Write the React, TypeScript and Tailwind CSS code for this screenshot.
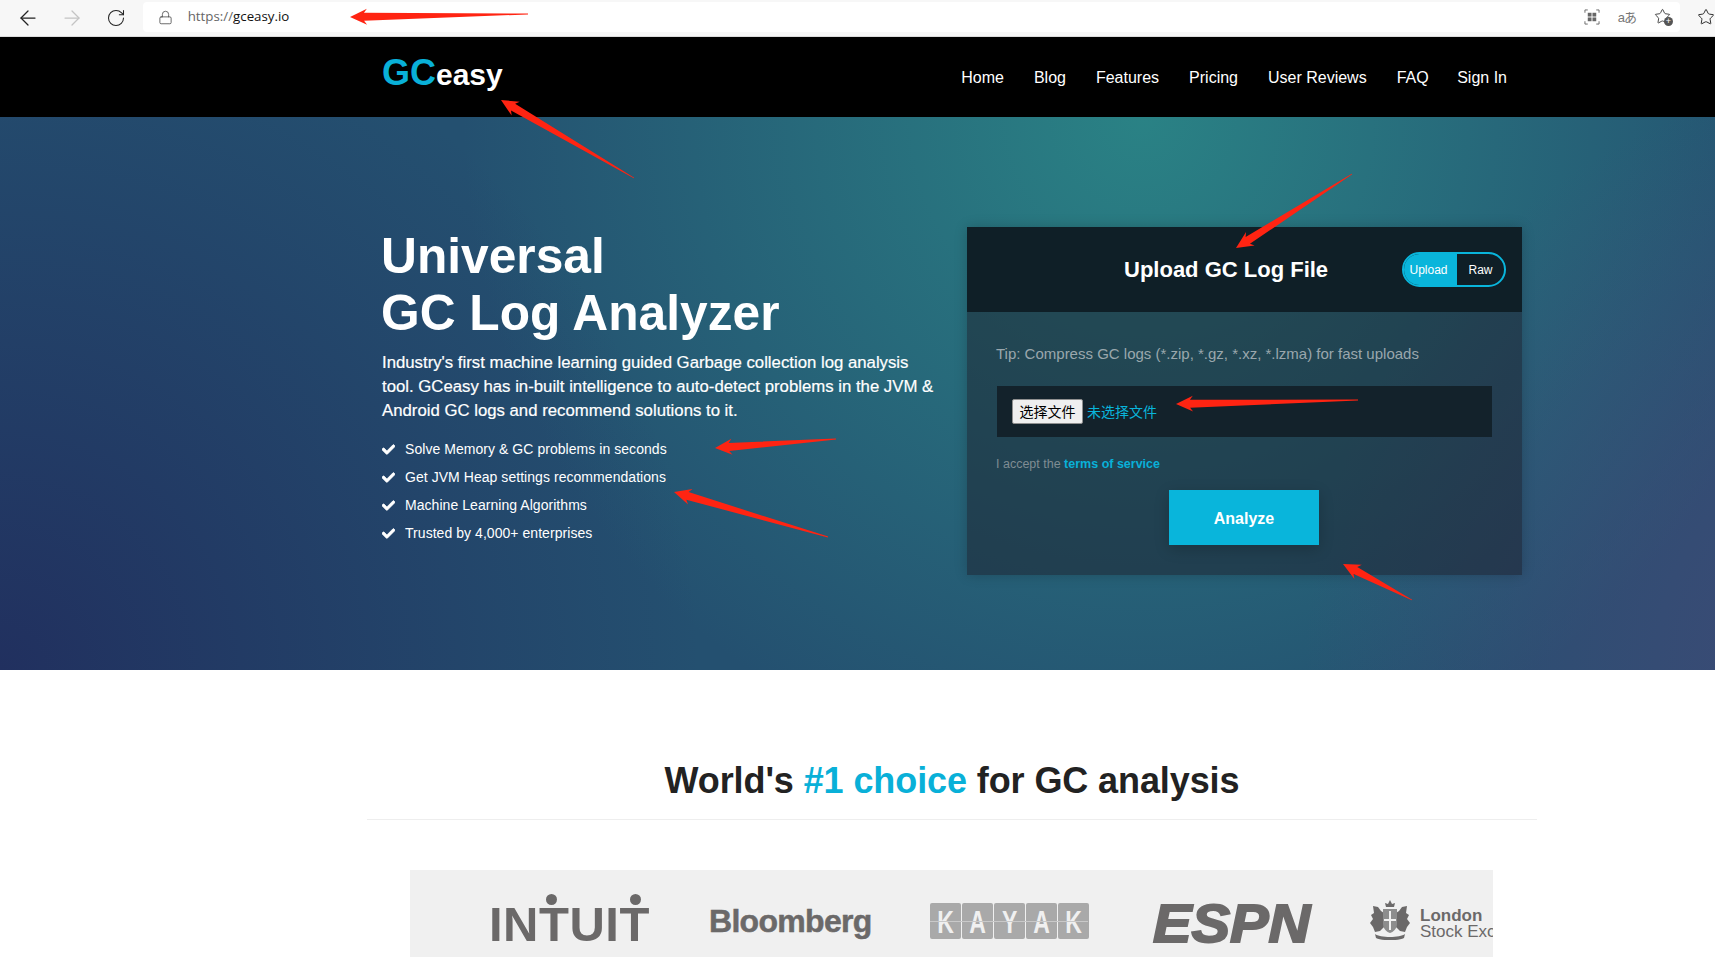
import { ArrowLeft, ArrowRight, Lock, RotateCw, Star } from "lucide-react";
import { FaCheck } from "react-icons/fa";

const navLinks = ["Home", "Blog", "Features", "Pricing", "User Reviews", "FAQ", "Sign In"];

const bullets = [
  "Solve Memory & GC problems in seconds",
  "Get JVM Heap settings recommendations",
  "Machine Learning Algorithms",
  "Trusted by 4,000+ enterprises",
];

// tip x, tip y, tail x, tail y
const arrows = [
  [350, 17, 528, 14],
  [501, 100, 634, 178],
  [1236, 248, 1352, 174],
  [715, 448, 836, 439],
  [674, 492, 828, 537],
  [1176, 404, 1358, 400],
  [1343, 564, 1412, 600],
];

function arrowPoints([x1, y1, x2, y2]: number[]) {
  const len = Math.hypot(x2 - x1, y2 - y1);
  const ux = (x2 - x1) / len;
  const uy = (y2 - y1) / len;
  const at = (along: number, side: number) =>
    `${x1 + ux * along - uy * side},${y1 + uy * along + ux * side}`;
  return [at(0, 0), at(17, -8), at(14, -4), at(len, -0.4), at(len, 0.4), at(14, 4), at(17, 8)].join(" ");
}

function BrowserBar() {
  return (
    <div className="h-[37px] bg-[#f7f7f7] border-b border-[#dcdcdc] flex items-start text-[#222]">
      <div className="w-[143px] h-[36px] flex items-center pl-[16px] gap-[20px]">
        <ArrowLeft size={24} strokeWidth={1.25} />
        <ArrowRight size={24} strokeWidth={1.25} className="text-[#c4c4c4]" />
        <RotateCw size={20} strokeWidth={1.25} className="ml-[2px]" />
      </div>
      <div className="w-[1541px] h-[30px] mt-[2px] bg-white rounded-[4px] flex items-center">
        <Lock size={15} strokeWidth={1.25} className="ml-[15px] text-[#444]" />
        <span className="ml-[15px] text-[13.3px] text-[#666] font-['Open_Sans',sans-serif]">
          https://<span className="text-[#111]">gceasy.io</span>
        </span>
        <div className="ml-auto flex items-center gap-[18px] pr-[8px] text-[#666]">
          <svg width="16" height="16" viewBox="0 0 17 17" fill="none" stroke="currentColor">
            <path d="M1 4V1h3M13 1h3v3M16 13v3h-3M4 16H1v-3" />
            <rect x="4" y="4" width="4" height="4" fill="currentColor" stroke="none" />
            <rect x="9" y="4" width="4" height="4" fill="currentColor" stroke="none" />
            <rect x="4" y="9" width="4" height="4" fill="currentColor" stroke="none" />
            <rect x="9" y="9" width="4" height="4" fill="currentColor" stroke="none" />
          </svg>
          <span className="whitespace-nowrap text-[13px] leading-none tracking-[-1px] text-[#777] font-['Liberation_Sans','Noto_Sans_CJK_JP',sans-serif]">
            aあ
          </span>
          <div className="relative w-[18px] h-[18px]">
            <Star size={17} strokeWidth={1.25} className="text-[#333]" />
            <span className="absolute right-[-1px] bottom-[0px] w-[9px] h-[9px] rounded-full bg-[#555] text-white text-[9px] leading-[8px] text-center">
              +
            </span>
          </div>
        </div>
      </div>
      <Star size={18} strokeWidth={1.25} className="ml-[17px] mt-[8px] shrink-0" />
    </div>
  );
}

function NavBar() {
  return (
    <header className="h-[80px] bg-black">
      <div className="w-[1170px] mx-auto px-[15px] flex items-center justify-between h-full">
        <a className="font-bold leading-none -mt-[8px]">
          <span className="text-[36px] text-[#09b0d8]">GC</span>
          <span className="text-[30px] text-white">easy</span>
        </a>
        <nav className="flex gap-[30px] text-[16px] text-white pr-[15px] pt-[2px]">
          {navLinks.map((link) => (
            <a key={link} className="last:-ml-[1.5px]">
              {link}
            </a>
          ))}
        </nav>
      </div>
    </header>
  );
}

function UploadCard() {
  return (
    <div className="w-[555px] h-[348px] bg-[rgba(27,29,41,0.5)] shadow-[0_0_12px_rgba(0,0,0,0.2)]">
      <div className="h-[85px] bg-[#0f1f27] flex items-center pl-[157px] pr-[16px]">
        <h2 className="text-[22px] font-bold text-white">Upload GC Log File</h2>
        <div className="ml-auto w-[104px] h-[35px] flex rounded-full border-2 border-[#09b5db] overflow-hidden text-[12px] text-white">
          <span className="w-[53px] pr-[4px] bg-[#09b5db] flex items-center justify-center">Upload</span>
          <span className="flex-1 flex items-center justify-center">Raw</span>
        </div>
      </div>
      <div className="px-[30px] pt-[32px]">
        <p className="-ml-[1px] text-[15px] leading-[20px] text-[#9aa7ad]">
          Tip: Compress GC logs (*.zip, *.gz, *.xz, *.lzma) for fast uploads
        </p>
        <div className="mt-[22px] h-[51px] bg-[#13222b] flex items-center pl-[15px] gap-[4px] font-['Liberation_Sans','Noto_Sans_CJK_SC',sans-serif] text-[14px]">
          <button className="w-[71px] h-[25px] pt-[1px] bg-[#efefef] border border-[#8f8f8f] rounded-[2px] text-black">
            选择文件
          </button>
          <span className="text-[#09b5db] pt-[1px]">未选择文件</span>
        </div>
        <p className="-ml-[1px] mt-[19px] text-[12.5px] leading-[16px] text-[#7f8c93]">
          I accept the <a className="font-bold text-[#09b0d8]">terms of service</a>
        </p>
        <button className="block ml-[172px] mt-[18px] w-[150px] h-[55px] pt-[3px] bg-[#09b5db] text-white text-[16px] font-bold shadow-[0_4px_14px_rgba(0,0,0,0.2)]">
          Analyze
        </button>
      </div>
    </div>
  );
}

function Hero() {
  return (
    <section className="h-[553px] bg-[#245070] bg-[radial-gradient(circle_600px_at_100%_100%,rgba(70,72,120,0.85),transparent),radial-gradient(circle_700px_at_0%_100%,#21305f,transparent),radial-gradient(circle_680px_at_60%_0%,#2a8285,transparent)]">
      <div className="w-[1170px] mx-auto px-[15px] pt-[110px] flex gap-[30px] text-white">
        <div className="w-[555px] pt-[1px]">
          <h1 className="-ml-[1px] text-[49.7px] leading-[57px] font-bold">
            Universal
            <br />
            GC Log Analyzer
          </h1>
          <p className="mt-[9px] text-[16.75px] leading-[24px] [-webkit-text-stroke:0.2px_white]">
            Industry's first machine learning guided Garbage collection log analysis tool. GCeasy has in-built
            intelligence to auto-detect problems in the JVM &amp; Android GC logs and recommend solutions to it.
          </p>
          <ul className="mt-[12px] text-[14px] leading-[28px] tracking-[0.05px]">
            {bullets.map((item) => (
              <li key={item} className="flex items-center gap-[10px]">
                <FaCheck size={13} stroke="currentColor" strokeWidth={30} />
                {item}
              </li>
            ))}
          </ul>
        </div>
        <UploadCard />
      </div>
    </section>
  );
}

function IntuitLogo() {
  return (
    <div className="relative shrink-0 ml-[79px] mt-[30px] w-[163px] text-[49px] leading-none font-bold tracking-[0.5px]">
      INTUIT
      <span className="absolute left-[57px] top-[-6px] w-[11px] h-[11px] rounded-full bg-[#6b6969]" />
      <span className="absolute left-[141px] top-[-6px] w-[11px] h-[11px] rounded-full bg-[#6b6969]" />
    </div>
  );
}

function KayakLogo() {
  return (
    <div className="relative shrink-0 ml-[58px] mt-[33px] w-[158px] flex gap-[1px]">
      {["K", "A", "Y", "A", "K"].map((letter, i) => (
        <span
          key={i}
          className="w-[31px] shrink-0 h-[36px] bg-[#a9a9a9] rounded-[2px] text-[#f0f0f0] text-[32px] leading-[38px] font-bold text-center"
        >
          <span className="inline-block scale-x-[0.72]">{letter}</span>
        </span>
      ))}
      <span className="absolute left-0 right-0 top-[18px] h-[1px] bg-[#c9c9c9]" />
    </div>
  );
}

function CrestLogo() {
  return (
    <svg width="40" height="40" viewBox="0 0 40 40" className="shrink-0 ml-[57px] mt-[30px]" fill="#6b6969">
      <path d="M20 0l2 4 3-1-1 4h-8l-1-4 3 1z" />
      <path d="M3 6l5 1 3 4 3 2v14l-4 4-5 1-2-5-3-4 3-4-2-4 3-2z" />
      <path d="M37 6l-5 1-3 4-3 2v14l4 4 5 1 2-5 3-4-3-4 2-4-3-2z" />
      <path d="M13 9h14v15c0 5-4 8-7 9-3-1-7-4-7-9z" fill="#8d8d8d" />
      <path d="M19 11h2v8h5v2h-5v9h-2v-9h-5v-2h5z" fill="#f0f0f0" />
      <path d="M5 34c5 4 25 4 30 0l-1 4c-6 3-22 3-28 0z" />
    </svg>
  );
}

function LogoStrip() {
  return (
    <div className="ml-[410px] w-[1083px] h-[87px] bg-[#f0f0f0] overflow-hidden flex items-start text-[#6b6969] whitespace-nowrap">
      <IntuitLogo />
      <span className="shrink-0 ml-[57px] mt-[35px] w-[163px] text-[32px] leading-none font-bold tracking-[-0.7px] [-webkit-text-stroke:0.5px_#6b6969]">
        Bloomberg
      </span>
      <KayakLogo />
      <span className="shrink-0 ml-[65px] mt-[26px] w-[160px] text-[54px] leading-none font-bold italic [-webkit-text-stroke:2px_#6b6969] scale-x-[1.07] origin-left">
        ESPN
      </span>
      <CrestLogo />
      <div className="shrink-0 ml-[10px] mt-[38px] text-[17px] leading-[16px]">
        <div className="font-bold">London</div>
        <div>Stock Exchange</div>
      </div>
    </div>
  );
}

export default function App() {
  return (
    <div className="relative w-[1715px] h-[957px] overflow-hidden bg-white font-['Liberation_Sans',Arial,sans-serif]">
      <BrowserBar />
      <div className="w-[1904px]">
        <NavBar />
        <Hero />
        <div className="w-[1170px] mx-auto border-b border-[#eeeeee] h-[150px] flex items-end justify-center pb-[18px]">
          <h2 className="text-[36px] leading-[40px] font-bold text-[#222] tracking-[-0.1px]">
            World's <span className="text-[#09b0d8]">#1 choice</span> for GC analysis
          </h2>
        </div>
        <div className="mt-[50px]">
          <LogoStrip />
        </div>
      </div>
      <svg className="absolute inset-0 pointer-events-none" width="1715" height="957">
        {arrows.map((a, i) => (
          <polygon key={i} points={arrowPoints(a)} fill="#ff2412" />
        ))}
      </svg>
    </div>
  );
}
